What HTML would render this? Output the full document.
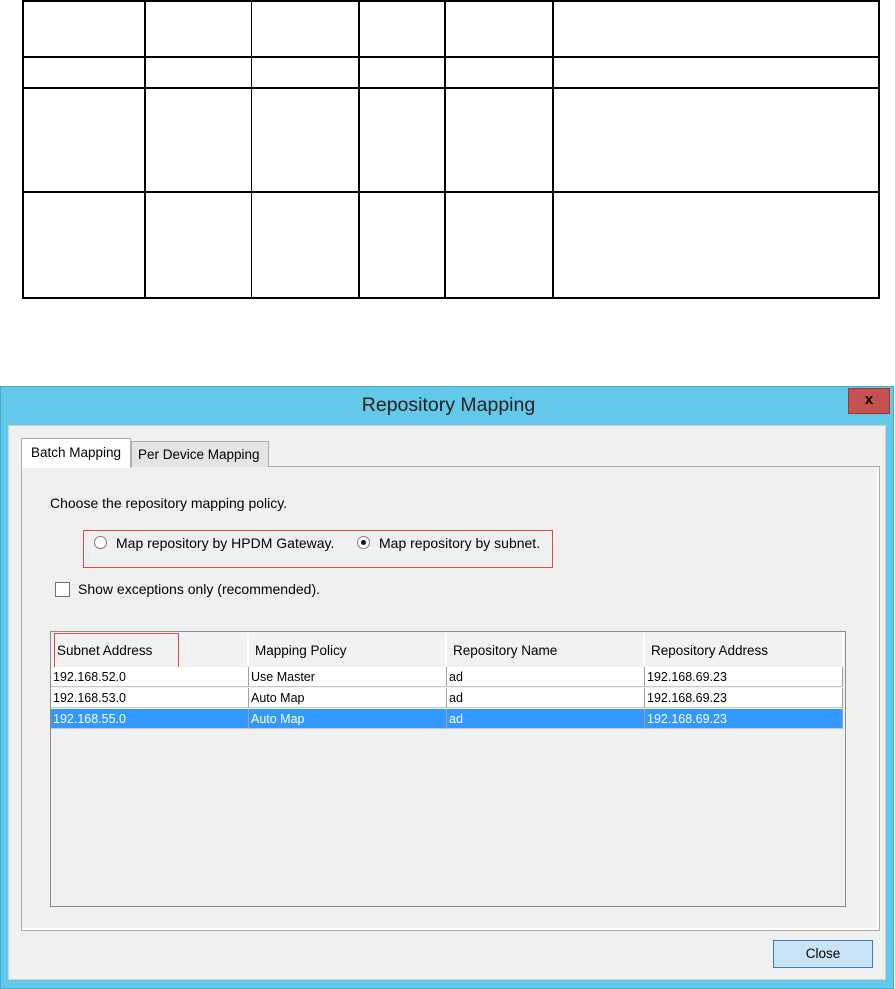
<!DOCTYPE html>
<html><head><style>
*{margin:0;padding:0;box-sizing:border-box}
body{width:895px;height:989px;background:#fff;position:relative;overflow:hidden;font-family:"Liberation Sans",Arial,sans-serif;font-size:12px;color:#000}
.a{position:absolute}
.h{position:absolute;height:2px;background:#000;left:22px;width:858px}
.v{position:absolute;width:1.5px;background:#000;top:0;height:299px}
.t{position:absolute;font-size:14px;white-space:nowrap}
.cell{position:absolute;height:20px;line-height:20px;padding-left:2px;border-right:1px solid #a0a0a0;border-bottom:1px solid #c8c8c8;font-size:12.5px}
.hd{position:absolute;top:633px;height:33px;line-height:36px;background:#f2f2f2;border-right:2px solid #fff;padding-left:6px;font-size:13.5px}
</style></head><body>
<div class="h" style="top:0"></div>
<div class="h" style="top:56px"></div>
<div class="h" style="top:87px"></div>
<div class="h" style="top:191px"></div>
<div class="h" style="top:297px"></div>
<div class="v" style="left:22px"></div>
<div class="v" style="left:144px"></div>
<div class="v" style="left:251px;width:1px"></div>
<div class="v" style="left:358px"></div>
<div class="v" style="left:444px"></div>
<div class="v" style="left:552px"></div>
<div class="v" style="left:878px"></div>

<div class="a" style="left:0;top:386px;width:894px;height:603px;background:#63c9ea;border:1px solid #4aa8c8"></div>
<div class="a" style="left:0;top:394px;width:897px;text-align:center;font-size:19.5px;color:#222">Repository Mapping</div>
<div class="a" style="left:848px;top:388px;width:42px;height:26px;background:#c75050;border:1px solid #9a3a3a;color:#000;font-weight:bold;font-size:15px;text-align:center;line-height:22px">x</div>
<div class="a" style="left:8px;top:425px;width:878px;height:555px;background:#f0f0f0;border:1px solid #d0d0d0"></div>
<div class="a" style="left:21px;top:466px;width:859px;height:465px;border:1px solid #acacac;background:#f0f0f0;box-shadow:inset -2px -2px 0 #fff"></div>
<div class="a" style="left:131px;top:441px;width:138px;height:26px;background:#e4e4e4;border:1px solid #acacac;border-bottom:none"></div>
<div class="t" style="left:138px;top:447px;font-size:13.5px">Per Device Mapping</div>
<div class="a" style="left:21px;top:438px;width:110px;height:30px;background:#fff;border:1px solid #acacac;border-bottom:none"></div>
<div class="t" style="left:31px;top:445px;font-size:13.5px">Batch Mapping</div>

<div class="t" style="left:50px;top:495px">Choose the repository mapping policy.</div>
<div class="a" style="left:83px;top:530px;width:470px;height:38px;border:1px solid #e04848"></div>
<div class="a" style="left:94px;top:536px;width:13px;height:13px;border:1px solid #808080;border-radius:50%;background:#fff"></div>
<div class="t" style="left:116px;top:535px">Map repository by HPDM Gateway.</div>
<div class="a" style="left:357px;top:536px;width:13px;height:13px;border:1px solid #808080;border-radius:50%;background:#fff"></div>
<div class="a" style="left:361px;top:540px;width:5px;height:5px;border-radius:50%;background:#111"></div>
<div class="t" style="left:379px;top:535px">Map repository by subnet.</div>
<div class="a" style="left:55px;top:582px;width:15px;height:15px;border:1px solid #707070;background:#fff"></div>
<div class="t" style="left:78px;top:581px">Show exceptions only (recommended).</div>

<div class="a" style="left:50px;top:631px;width:796px;height:276px;border:1px solid #8c8c8c;background:#f0f0f0"></div>
<div class="hd" style="left:51px;width:198px">Subnet Address</div>
<div class="hd" style="left:249px;width:198px">Mapping Policy</div>
<div class="hd" style="left:447px;width:198px">Repository Name</div>
<div class="hd" style="left:645px;width:199px">Repository Address</div>
<div class="a" style="left:54px;top:633px;width:125px;height:35px;border:1px solid #e04848"></div>

<div class="cell" style="left:51px;top:667px;width:198px;background:#fff">192.168.52.0</div>
<div class="cell" style="left:249px;top:667px;width:198px;background:#fff">Use Master</div>
<div class="cell" style="left:447px;top:667px;width:198px;background:#fff">ad</div>
<div class="cell" style="left:645px;top:667px;width:198px;background:#fff">192.168.69.23</div>
<div class="cell" style="left:51px;top:688px;width:198px;background:#fff">192.168.53.0</div>
<div class="cell" style="left:249px;top:688px;width:198px;background:#fff">Auto Map</div>
<div class="cell" style="left:447px;top:688px;width:198px;background:#fff">ad</div>
<div class="cell" style="left:645px;top:688px;width:198px;background:#fff">192.168.69.23</div>
<div class="cell" style="left:51px;top:709px;width:198px;background:#3399ff;color:#fff">192.168.55.0</div>
<div class="cell" style="left:249px;top:709px;width:198px;background:#3399ff;color:#fff">Auto Map</div>
<div class="cell" style="left:447px;top:709px;width:198px;background:#3399ff;color:#fff">ad</div>
<div class="cell" style="left:645px;top:709px;width:198px;background:#3399ff;color:#fff">192.168.69.23</div>

<div class="a" style="left:773px;top:940px;width:100px;height:28px;background:#c9e3f6;border:1px solid #3c7fb1;text-align:center;line-height:26px;font-size:13.5px">Close</div>
</body></html>
